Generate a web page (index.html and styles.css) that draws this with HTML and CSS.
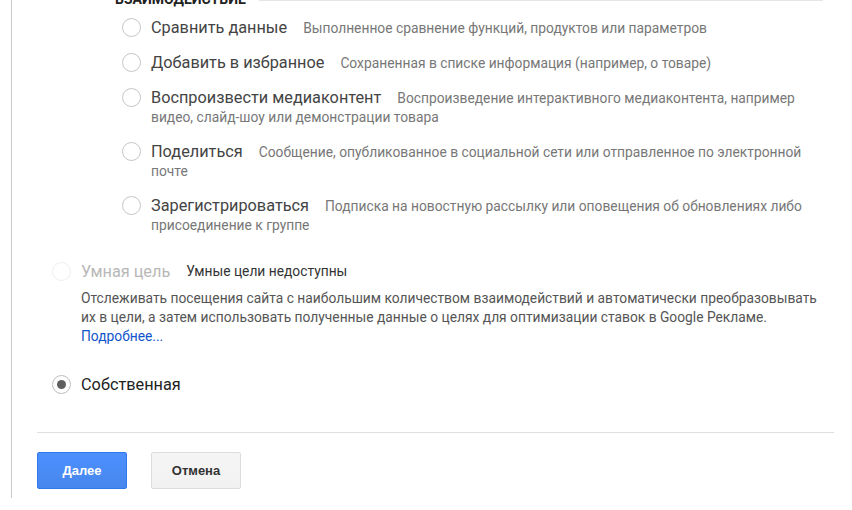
FILE: index.html
```html
<!DOCTYPE html>
<html lang="ru">
<head>
<meta charset="utf-8">
<title>Цель</title>
<link rel="stylesheet" href="styles.css">
</head>
<body>
<div class="panel">
  <div class="inner">
    <div class="group">
      <div class="group-head">
        <span class="group-title">Взаимодействие</span>
        <span class="group-line"></span>
      </div>
      <ul class="items">
        <li class="item">
          <span class="radio"></span>
          <div class="item-text"><span class="label">Сравнить данные</span><span class="desc">Выполненное сравнение функций, продуктов или параметров</span></div>
        </li>
        <li class="item">
          <span class="radio"></span>
          <div class="item-text"><span class="label">Добавить в избранное</span><span class="desc">Сохраненная в списке информация (например, о товаре)</span></div>
        </li>
        <li class="item">
          <span class="radio"></span>
          <div class="item-text"><span class="label">Воспроизвести медиаконтент</span><span class="desc">Воспроизведение интерактивного медиаконтента, например видео, слайд-шоу или демонстрации товара</span></div>
        </li>
        <li class="item">
          <span class="radio"></span>
          <div class="item-text"><span class="label">Поделиться</span><span class="desc">Сообщение, опубликованное в социальной сети или отправленное по электронной почте</span></div>
        </li>
        <li class="item">
          <span class="radio"></span>
          <div class="item-text"><span class="label">Зарегистрироваться</span><span class="desc">Подписка на новостную рассылку или оповещения об обновлениях либо присоединение к группе</span></div>
        </li>
      </ul>
    </div>

    <div class="option smart">
      <div class="option-row">
        <span class="radio radio-disabled"></span>
        <span class="option-label option-label-disabled">Умная цель</span>
        <span class="option-note">Умные цели недоступны</span>
      </div>
      <p class="option-desc">Отслеживать посещения сайта с наибольшим количеством взаимодействий и автоматически преобразовывать их в цели, а затем использовать полученные данные о целях для оптимизации ставок в Google Рекламе. <a class="link" href="#">Подробнее...</a></p>
    </div>

    <div class="option custom">
      <div class="option-row">
        <span class="radio radio-checked"></span>
        <span class="option-label">Собственная</span>
      </div>
    </div>

    <div class="separator"></div>

    <div class="actions">
      <button class="btn btn-primary" type="button">Далее</button>
      <button class="btn btn-secondary" type="button">Отмена</button>
    </div>
  </div>
</div>
</body>
</html>
```

FILE: styles.css
```css
html, body {
  margin: 0;
  padding: 0;
  background: #ffffff;
}

body {
  font-family: Roboto, "Noto Sans", Arial, sans-serif;
  color: #444;
  overflow: hidden;
}

.panel {
  margin-left: 11px;
  border-left: 1px solid #cccccc;
  padding-bottom: 9px;
}

.inner {
  padding-left: 25px;
  padding-right: 18px;
}

.group {
  margin-left: 78px;
  margin-right: 11px;
}

.group-head {
  display: flex;
  margin-top: -9px;
  height: 16px;
}

.group-title {
  font-size: 14px;
  font-weight: 700;
  line-height: 16px;
  text-transform: uppercase;
  color: #222;
}

.group-line {
  flex: 1;
  height: 0;
  border-top: 1px solid #e5e5e5;
  margin-top: 9px;
  margin-left: 13px;
}

.items {
  list-style: none;
  margin: 11px 0 0 0;
  padding: 0 0 0 7px;
}

.item {
  display: flex;
  margin-bottom: 16px;
}

.item:last-child {
  margin-bottom: 0;
}

.radio {
  flex: none;
  box-sizing: border-box;
  width: 19px;
  height: 19px;
  border: 1px solid #c6c6c6;
  border-radius: 50%;
  background: #fff;
  margin-top: 0;
  position: relative;
}

.item .radio {
  margin-right: 10px;
}

.item-text {
  flex: 1;
  font-size: 16.3px;
  line-height: 19px;
}

.label {
  font-size: 16.3px;
  color: #444;
  margin-right: 16px;
}

.desc {
  font-size: 13.8px;
  line-height: 1;
  color: #777;
}

.option {
  margin-left: 15px;
}

.smart {
  margin-top: 28px;
}

.option-row {
  display: flex;
  align-items: flex-start;
  font-size: 16.3px;
  line-height: 19px;
}

.option-row .radio {
  margin-right: 10px;
}

.radio-disabled {
  border-color: #eeeeee;
}

.radio-checked {
  border-color: #bdbdbd;
}

.radio-checked::after {
  content: "";
  position: absolute;
  left: 4px;
  top: 4px;
  width: 9px;
  height: 9px;
  border-radius: 50%;
  background: #5f5f5f;
}

.option-label {
  font-size: 16.3px;
  color: #222;
}

.option-label-disabled {
  color: #b8b8b8;
  margin-right: 16px;
}

.option-note {
  font-size: 13.8px;
  color: #333;
}

.option-desc {
  margin: 8px 0 0 29px;
  font-size: 13.8px;
  line-height: 19px;
  color: #555;
  max-width: 742px;
}

.link {
  color: #1155cc;
  text-decoration: none;
}

.custom {
  margin-top: 29px;
}

.separator {
  height: 1px;
  background: #e0e0e0;
  margin-top: 38px;
}

.actions {
  display: flex;
  gap: 24px;
  margin-top: 19px;
}

.btn {
  box-sizing: border-box;
  width: 90px;
  height: 37px;
  border-radius: 2px;
  font-family: "Liberation Sans", Arial, sans-serif;
  font-size: 13px;
  font-weight: 700;
  padding: 0;
  cursor: pointer;
}

.btn-primary {
  background: linear-gradient(#4d90fe, #4787ed);
  border: 1px solid #3079ed;
  color: #ffffff;
}

.btn-secondary {
  background: linear-gradient(#f5f5f5, #f1f1f1);
  border: 1px solid #dcdcdc;
  color: #333333;
}
```
